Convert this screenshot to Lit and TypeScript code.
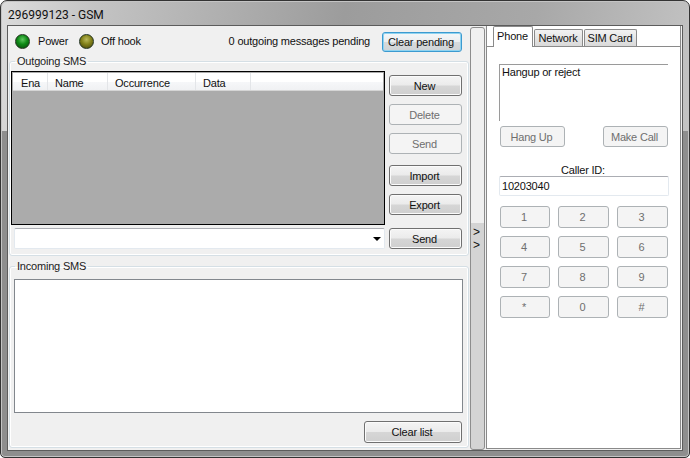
import { LitElement, html, css } from "lit";
import { customElement } from "lit/decorators.js";

@customElement("app-root")
export class AppRoot extends LitElement {
  static styles = css`
    :host { display: block; width: 690px; height: 458px; overflow: hidden; background: #fff; font: 11px "Liberation Sans", Arial, sans-serif; letter-spacing: -0.2px; color: #111; }
    * { box-sizing: border-box; }
    .window { width: 690px; height: 458px; display: flex; flex-direction: column; border: 1px solid #333; border-radius: 7px 7px 5px 5px;
      background: linear-gradient(to bottom, transparent 130px, #8e8e8e 130px), linear-gradient(100deg, #dcdcdc 0%, #c4c4c4 12%, #9c9c9c 45%, #a8a8a8 70%, #cdcdcd 100%); padding: 0 6px 6px 6px; box-shadow: inset 0 0 0 1px #c4c4c4; }
    .title { height: 24px; display: flex; align-items: center; padding: 3px 0 0 1px; font: 12px Roboto, sans-serif; letter-spacing: 0; color: #111; flex: none; }
    .client { flex: 1; min-height: 0; display: grid; grid-template-columns: 462px 16px 196px; border: 1px solid #5c5c5c; background: #f0f0f0; width: 676px; }
    .left { display: flex; flex-direction: column; padding: 0 0 0 1px; min-width: 0; }
    .status { height: 29px; display: flex; align-items: center; flex: none; padding: 0 8px 0 6px; }
    .led { width: 15px; height: 15px; border-radius: 50%; border: 1px solid #22331f; flex: none; margin-top: 2px; }
    .led.green { background: radial-gradient(circle at 50% 35%, #5fc85f 0, #0e8a16 45%, #06430b 100%); }
    .led.olive { background: radial-gradient(circle at 50% 35%, #b9b95a 0, #83821a 45%, #3f3e0a 100%); }
    .status .l1 { margin-left: 8px; width: 41px; margin-top: 1px; }
    .status .l2 { margin-left: 7px; margin-top: 1px; }
    .pending { margin-left: auto; margin-right: 12px; margin-top: 1px; }
    button { font: inherit; letter-spacing: inherit; color: #111; height: 21px; padding: 0 2px 0 0; border: 1px solid #707070; border-radius: 3px; background: linear-gradient(#f4f4f4 0, #ebebeb 48%, #d6d6d6 52%, #cfcfcf 100%); box-shadow: inset 0 0 0 1px #fbfbfb; display: block; }
    button.focus { width: 80px; height: 20px; margin-top: 3px; border-color: #3c9ad0; box-shadow: inset 0 0 0 1px #8fd3f0; background: linear-gradient(#f4f7f9 0, #ebeef0 48%, #d6dadc 52%, #cfd3d6 100%); }
    button[disabled] { background: #f4f4f4; border-color: #adb2b5; color: #6f6f6f; box-shadow: none; }
    fieldset { margin: 0; padding: 0; border: 1px solid #d5dfe5; border-radius: 3px; box-shadow: inset 0 0 0 1px #fff; min-width: 0; }
    legend { padding: 0 2px; margin-left: 4px; line-height: 13px; color: #222; }
    .out { height: 201px; flex: none; display: flex; gap: 4px; padding: 3px 0 0 1px; margin-right: 1px; }
    .out .main { width: 374px; display: flex; flex-direction: column; flex: none; }
    .list { height: 154px; background: #ababab; border: 1px solid #000; padding: 1px; flex: none; }
    .head { height: 18px; background: linear-gradient(#fff 0, #fff 50%, #f6f7f9 52%, #f0f1f3 100%); border-bottom: 1px solid #d5d5d5; display: grid; grid-template-columns: 35px 60px 88px 55px 1fr; }
    .head span { border-right: 1px solid #e3e5e8; padding: 3px 0 0 7px; line-height: 14px; }
    .head span:first-child { padding-left: 8px; }
    .head span:last-child { border: 0; }
    .combo { height: 21px; margin: 3px 0 0 3px; background: #fff; border: 1px solid #e3e9ef; border-top-color: #abadb3; border-radius: 2px; display: flex; align-items: center; justify-content: flex-end; padding-right: 3px; flex: none; }
    .arrow { width: 0; height: 0; border: 4px solid transparent; border-top: 4px solid #000; border-bottom: 0; }
    .btns { width: 73px; flex: none; display: flex; flex-direction: column; padding-top: 4px; }
    .btns button { margin-bottom: 8px; flex: none; }
    .btns .g3 { margin-bottom: 11px; }
    .btns .g5 { margin-bottom: 13px; }
    .inc { flex: 1; min-height: 0; margin-top: 4px; margin-right: 1px; margin-bottom: 2px; padding: 6px 5px 0 4px; display: flex; flex-direction: column; }
    .inc legend { margin-left: 1px; }
    .inbox { width: 449px; height: 134px; background: #fff; border: 1px solid #82878d; flex: none; }
    .inc .row { display: flex; justify-content: flex-end; margin-top: 8px; padding-right: 1px; }
    .inc button { width: 98px; height: 22px; }
    .split { display: flex; flex-direction: column; border: 1px solid #8d8d8d; border-radius: 3px; background: #d4d4d4; margin: 1px 1px 0 0; }
    .split .top { height: 195px; background: #f0f0f0; border-radius: 3px 3px 0 0; flex: none; }
    .chevs { font-size: 12px; letter-spacing: 0; line-height: 13px; padding-left: 2px; color: #111; margin-top: 3px; }
    .right { background: #fff; border-left: 1px solid #8a8a8a; border-right: 1px solid #8a8a8a; border-bottom: 1px solid #8a8a8a; display: flex; flex-direction: column; width: 195px; margin-bottom: 1px; }
    .tabs { height: 21px; display: flex; align-items: flex-end; padding-left: 6px; gap: 1px; flex: none; background: #fff; border-bottom: 1px solid #8a8a8a; }
    .tab { height: 17px; border: 1px solid #8a8a8a; border-bottom: 0; background: linear-gradient(#f2f2f2, #d9d9d9); border-radius: 2px 2px 0 0; text-align: center; line-height: 17px; padding-right: 1px; }
    .tab.active { height: 21px; background: #fff; position: relative; margin-bottom: -1px; line-height: 19px; }
    .pane { padding: 17px 11px 0 12px; display: flex; flex-direction: column; }
    .hang { height: 57px; border-top: 1px solid #9a9a9a; border-left: 1px solid #9a9a9a; padding: 1px 2px; width: 169px; line-height: 13px; }
    .calls { display: flex; justify-content: space-between; margin-top: 5px; padding-left: 1px; width: 169px; }
    .calls button { width: 65px; }
    .cid { text-align: center; margin-top: 17px; line-height: 13px; width: 168px; }
    .cinput { width: 170px; height: 20px; background: #fff; border: 1px solid #e3e9ef; border-top-color: #abadb3; border-radius: 2px; padding: 2px; line-height: 14px; margin-top: -1px; }
    .pad { display: grid; grid-template-columns: 50px 51px 51px; column-gap: 8px; row-gap: 8px; margin-top: 10px; padding-left: 1px; }
    .pad button { height: 22px; }
  `;

  render() {
    const keys = ["1", "2", "3", "4", "5", "6", "7", "8", "9", "*", "0", "#"];
    return html`<div class="window">
      <div class="title">296999123 - GSM</div>
      <div class="client">
        <div class="left">
          <div class="status">
            <span class="led green"></span><span class="l1">Power</span>
            <span class="led olive"></span><span class="l2">Off hook</span>
            <span class="pending">0 outgoing messages pending</span>
            <button class="focus">Clear pending</button>
          </div>
          <fieldset class="out">
            <legend>Outgoing SMS</legend>
            <div class="main">
              <div class="list">
                <div class="head"><span>Ena</span><span>Name</span><span>Occurrence</span><span>Data</span><span></span></div>
              </div>
              <div class="combo"><span class="arrow"></span></div>
            </div>
            <div class="btns">
              <button>New</button>
              <button disabled>Delete</button>
              <button disabled class="g3">Send</button>
              <button>Import</button>
              <button class="g5">Export</button>
              <button>Send</button>
            </div>
          </fieldset>
          <fieldset class="inc">
            <legend>Incoming SMS</legend>
            <div class="inbox"></div>
            <div class="row"><button>Clear list</button></div>
          </fieldset>
        </div>
        <div class="split">
          <div class="top"></div>
          <div class="chevs">&gt;<br />&gt;</div>
        </div>
        <div class="right">
          <div class="tabs">
            <div class="tab active" style="width:40px">Phone</div>
            <div class="tab" style="width:49px">Network</div>
            <div class="tab" style="width:53px">SIM Card</div>
          </div>
          <div class="pane">
            <div class="hang">Hangup or reject</div>
            <div class="calls"><button disabled>Hang Up</button><button disabled>Make Call</button></div>
            <div class="cid">Caller ID:</div>
            <div class="cinput">10203040</div>
            <div class="pad">${keys.map((k) => html`<button disabled>${k}</button>`)}</div>
          </div>
        </div>
      </div>
    </div>`;
  }
}
